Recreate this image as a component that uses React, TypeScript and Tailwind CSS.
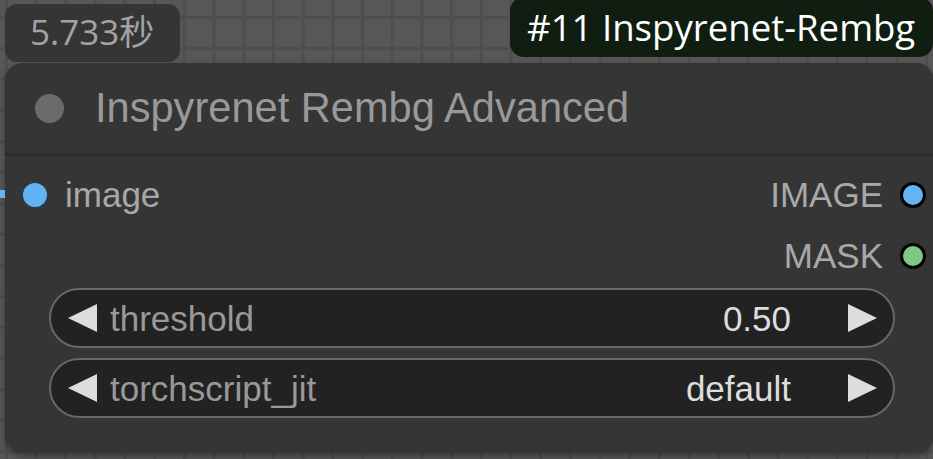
import React from "react";

// --- Small pieces ---

const Arrow = ({ dir }: { dir: "left" | "right" }) => (
  <svg width="29" height="28" viewBox="0 0 29 28" className="shrink-0">
    <polygon
      points={dir === "left" ? "29,0 0,14 29,28" : "0,0 29,14 0,28"}
      fill="#dddddd"
    />
  </svg>
);

const Widget = ({ label, value }: { label: string; value: string }) => (
  <div className="flex h-[60px] items-center rounded-full border-2 border-[#676767] bg-[#222222] pl-[17px] pr-[16px]">
    <Arrow dir="left" />
    <span className="ml-[13px] flex-1 text-[35px] leading-none text-[#999999]">
      {label}
    </span>
    <span className="text-[35px] leading-none text-[#dddddd]">{value}</span>
    <span className="ml-[57px] flex">
      <Arrow dir="right" />
    </span>
  </div>
);

const OutSlot = ({ name, color }: { name: string; color: string }) => (
  <div className="flex items-center gap-[17px]">
    <span className="text-[35px] leading-none text-[#a8a8a8]">{name}</span>
    <span className={`h-[26px] w-[26px] rounded-full border-[3px] border-black ${color}`} />
  </div>
);

// --- Page ---

export default function App() {
  return (
    <div className="relative h-[459px] w-[933px] overflow-hidden bg-[#575757] bg-[linear-gradient(to_right,#4e4e4e_3px,transparent_3px),linear-gradient(to_bottom,#4e4e4e_3px,transparent_3px)] bg-[size:29.7px_31px] bg-[position:4.8px_16px] font-['Liberation_Sans',Arial,sans-serif]">
      {/* badges above the node */}
      <div className="flex h-[63px] items-start justify-between">
        <div className="ml-[5px] mt-[4px] flex h-[58px] w-[175px] items-center rounded-[12px] bg-[#353535] pb-[3px] pl-[25px] font-['Open_Sans','Noto_Sans_CJK_SC',sans-serif] text-[35px] leading-none text-[#a3a3a3]">
          5.733秒
        </div>
        <div className="-mt-[3px] flex h-[60px] w-[423px] items-center rounded-[14px] bg-[#0f1e10] pl-[17px] font-['Open_Sans',sans-serif] text-[36.6px] leading-none text-white">
          #11 Inspyrenet-Rembg
        </div>
      </div>

      {/* node */}
      <div className="ml-[5px] h-[390px] w-[929px] rounded-[18px] bg-[#353535] shadow-[0_3px_6px_rgba(0,0,0,0.35)]">
        <div className="flex h-[93px] items-center gap-[31px] border-b-[3px] border-[#2b2b2b] pl-[30px]">
          <span className="h-[29px] w-[29px] rounded-full bg-[#6b6b6b]" />
          <span className="text-[41.6px] leading-none text-[#999999]">
            Inspyrenet Rembg Advanced
          </span>
        </div>

        <div className="pt-[8px]">
          <div className="flex h-[61px] items-center justify-between pl-[18px] pr-[8px]">
            <div className="flex items-center gap-[18px]">
              <span className="h-[24px] w-[24px] rounded-full bg-[#5fb4f7]" />
              <span className="text-[35px] leading-none text-[#a8a8a8]">image</span>
            </div>
            <OutSlot name="IMAGE" color="bg-[#64b5f6]" />
          </div>
          <div className="flex h-[61px] items-center justify-end pr-[8px]">
            <OutSlot name="MASK" color="bg-[#81c784]" />
          </div>

          <div className="ml-[44px] mt-[2px] flex w-[846px] flex-col gap-[10px]">
            <Widget label="threshold" value="0.50" />
            <Widget label="torchscript_jit" value="default" />
          </div>
        </div>
      </div>

      {/* incoming link */}
      <div className="absolute left-0 top-[190px] h-[8px] w-[5px] bg-[#5fb4f7]" />
    </div>
  );
}
